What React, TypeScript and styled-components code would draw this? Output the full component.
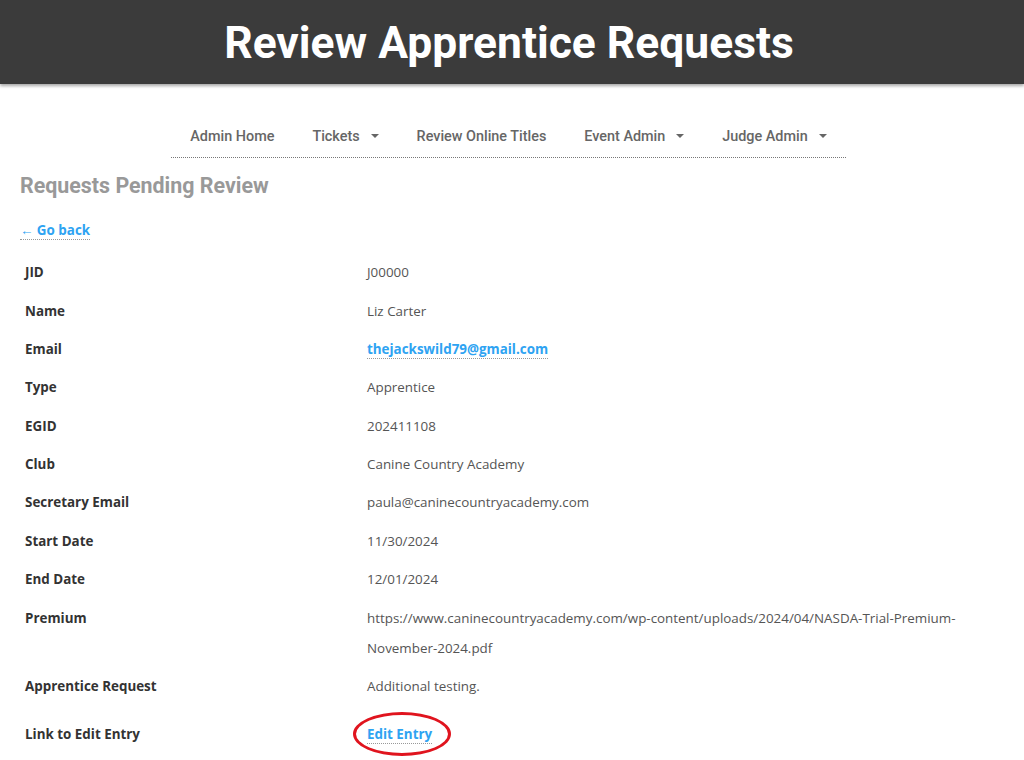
import React from 'react';
import styled, { createGlobalStyle } from 'styled-components';

const GlobalStyle = createGlobalStyle`
  html, body {
    margin: 0;
    padding: 0;
    background: #ffffff;
  }
  body {
    font-family: "Open Sans", "Liberation Sans", sans-serif;
    color: #333;
  }
`;

type Field = { label: string; value: React.ReactNode };

const navItems = [
  { label: 'Admin Home', caret: false },
  { label: 'Tickets', caret: true },
  { label: 'Review Online Titles', caret: false },
  { label: 'Event Admin', caret: true },
  { label: 'Judge Admin', caret: true },
];

const App = () => {
  const fields: Field[] = [
    { label: 'JID', value: 'J00000' },
    { label: 'Name', value: 'Liz Carter' },
    { label: 'Email', value: <S.Link href="#">thejackswild79@gmail.com</S.Link> },
    { label: 'Type', value: 'Apprentice' },
    { label: 'EGID', value: '202411108' },
    { label: 'Club', value: 'Canine Country Academy' },
    { label: 'Secretary Email', value: 'paula@caninecountryacademy.com' },
    { label: 'Start Date', value: '11/30/2024' },
    { label: 'End Date', value: '12/01/2024' },
    {
      label: 'Premium',
      value: 'https://www.caninecountryacademy.com/wp-content/uploads/2024/04/NASDA-Trial-Premium-November-2024.pdf',
    },
    { label: 'Apprentice Request', value: 'Additional testing.' },
  ];

  return (
    <>
      <GlobalStyle />
      <S.Header>
        <S.Title>Review Apprentice Requests</S.Title>
      </S.Header>
      <S.NavWrap>
        <S.Nav>
          {navItems.map(item => (
            <S.NavItem key={item.label}>
              {item.label}
              {item.caret && <S.Caret />}
            </S.NavItem>
          ))}
        </S.Nav>
      </S.NavWrap>
      <S.Main>
        <S.Heading>Requests Pending Review</S.Heading>
        <S.BackLink href="#">← Go back</S.BackLink>
        <S.Table>
          <tbody>
            {fields.map(f => (
              <tr key={f.label}>
                <S.Label>{f.label}</S.Label>
                <S.Value>{f.value}</S.Value>
              </tr>
            ))}
            <tr>
              <S.Label $last>Link to Edit Entry</S.Label>
              <S.Value $last>
                <S.Circled>
                  <S.Link href="#">Edit Entry</S.Link>
                  <S.Ring />
                </S.Circled>
              </S.Value>
            </tr>
          </tbody>
        </S.Table>
      </S.Main>
    </>
  );
};

const S = {
  Header: styled.header`
    height: 84px;
    padding-right: 6px;
    background: #3b3b3b;
    display: flex;
    align-items: center;
    justify-content: center;
    box-shadow: 0 2px 3px rgba(0, 0, 0, 0.35);
  `,
  Title: styled.h1`
    margin: 2px 0 0;
    font-family: Roboto, "Liberation Sans", sans-serif;
    font-weight: 700;
    font-size: 44.4px;
    color: #ffffff;
  `,
  NavWrap: styled.nav`
    display: flex;
    justify-content: center;
    padding: 40px 7px 0 0;
  `,
  Nav: styled.ul`
    list-style: none;
    margin: 0;
    padding: 0;
    display: flex;
    border-bottom: 1px dotted #777;
  `,
  NavItem: styled.li`
    display: flex;
    align-items: center;
    padding: 0 19px 9px;
    height: 24px;
    font-family: Roboto, "Liberation Sans", sans-serif;
    font-weight: 500;
    font-size: 14.4px;
    color: #666;
  `,
  Caret: styled.span`
    display: inline-block;
    margin-left: 11px;
    width: 0;
    height: 0;
    border-left: 4px solid transparent;
    border-right: 4px solid transparent;
    border-top: 4px solid #666;
  `,
  Main: styled.main`
    padding: 0 20px;
  `,
  Heading: styled.h2`
    margin: 15px 0 0;
    font-family: Roboto, "Liberation Sans", sans-serif;
    font-weight: 700;
    font-size: 21.4px;
    line-height: 26px;
    color: #999;
  `,
  BackLink: styled.a`
    display: inline-block;
    margin-top: 22px;
    font-size: 13.4px;
    font-weight: 700;
    color: #2ea3f2;
    text-decoration: none;
    border-bottom: 1px dotted #999;
    line-height: 18px;
  `,
  Link: styled.a`
    font-weight: 700;
    color: #2ea3f2;
    text-decoration: none;
    border-bottom: 1px dotted #999;
  `,
  Table: styled.table`
    width: 100%;
    margin-top: 13px;
    border-collapse: collapse;
    font-size: 13.4px;
  `,
  Label: styled.td<{ $last?: boolean }>`
    width: 337px;
    padding: ${p => (p.$last ? '13.5px 5px 8px' : '4.2px 5px')};
    font-weight: 700;
    color: #333;
    line-height: 30px;
    vertical-align: top;
  `,
  Value: styled.td<{ $last?: boolean }>`
    padding: ${p => (p.$last ? '13.5px 20px 8px 0' : '4.2px 20px 4.2px 0')};
    color: #555;
    line-height: 30px;
    vertical-align: top;
  `,
  Circled: styled.span`
    position: relative;
    display: inline-block;
  `,
  Ring: styled.span`
    position: absolute;
    left: -14px;
    right: -19px;
    top: -7px;
    bottom: -7px;
    border: 3px solid #e0141e;
    border-radius: 50%;
    pointer-events: none;
  `,
};

export default App;
